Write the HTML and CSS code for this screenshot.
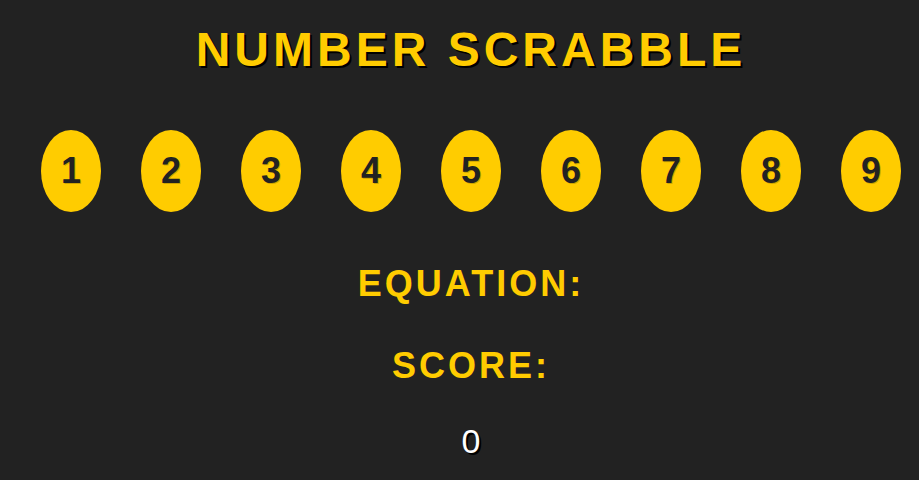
FILE: index.html
```html
<!DOCTYPE html>
<html>
<head>
<meta charset="utf-8">
<link rel="stylesheet" href="styles.css">
</head>
<body>
<div class="app">
  <h1 class="title">NUMBER SCRABBLE</h1>
  <div class="tiles">
    <div class="tile">1</div>
    <div class="tile">2</div>
    <div class="tile">3</div>
    <div class="tile">4</div>
    <div class="tile">5</div>
    <div class="tile">6</div>
    <div class="tile">7</div>
    <div class="tile">8</div>
    <div class="tile">9</div>
  </div>
  <h2 class="label label-eq">EQUATION:</h2>
  <h2 class="label label-score">SCORE:</h2>
  <div class="score">0</div>
</div>
</body>
</html>
```
FILE: styles.css
```css
html, body {
  margin: 0;
  padding: 0;
  background: #222222;
  height: 100%;
}
body {
  font-family: "Liberation Sans", Arial, sans-serif;
  overflow: hidden;
}
.app {
  display: flex;
  flex-direction: column;
  align-items: center;
  padding-left: 23px;
}
.title {
  margin: 26px 0 0 0;
  font-size: 48px;
  line-height: 48px;
  font-weight: bold;
  letter-spacing: 4px;
  color: #ffcc00;
  text-shadow: 2px 2px 0 #000;
}
.tiles {
  align-self: stretch;
  display: flex;
  justify-content: center;
  gap: 40px;
  margin-top: 56px;
}
.tile {
  width: 60px;
  height: 82px;
  border-radius: 50%;
  background: #ffcc00;
  color: #222222;
  display: flex;
  align-items: center;
  justify-content: center;
  font-size: 36px;
  font-weight: bold;
  text-shadow: 1px 1px 0 rgba(0,0,0,0.2);
}
.label {
  margin: 0;
  color: #ffcc00;
  font-size: 36px;
  line-height: 36px;
  font-weight: bold;
  letter-spacing: 3px;
}
.label-eq {
  margin-top: 54px;
}
.label-score {
  margin-top: 46px;
}
.score {
  margin-top: 40px;
  color: #ffffff;
  font-size: 34px;
  line-height: 34px;
  text-shadow: 2px 2px 0 #000;
}
```
